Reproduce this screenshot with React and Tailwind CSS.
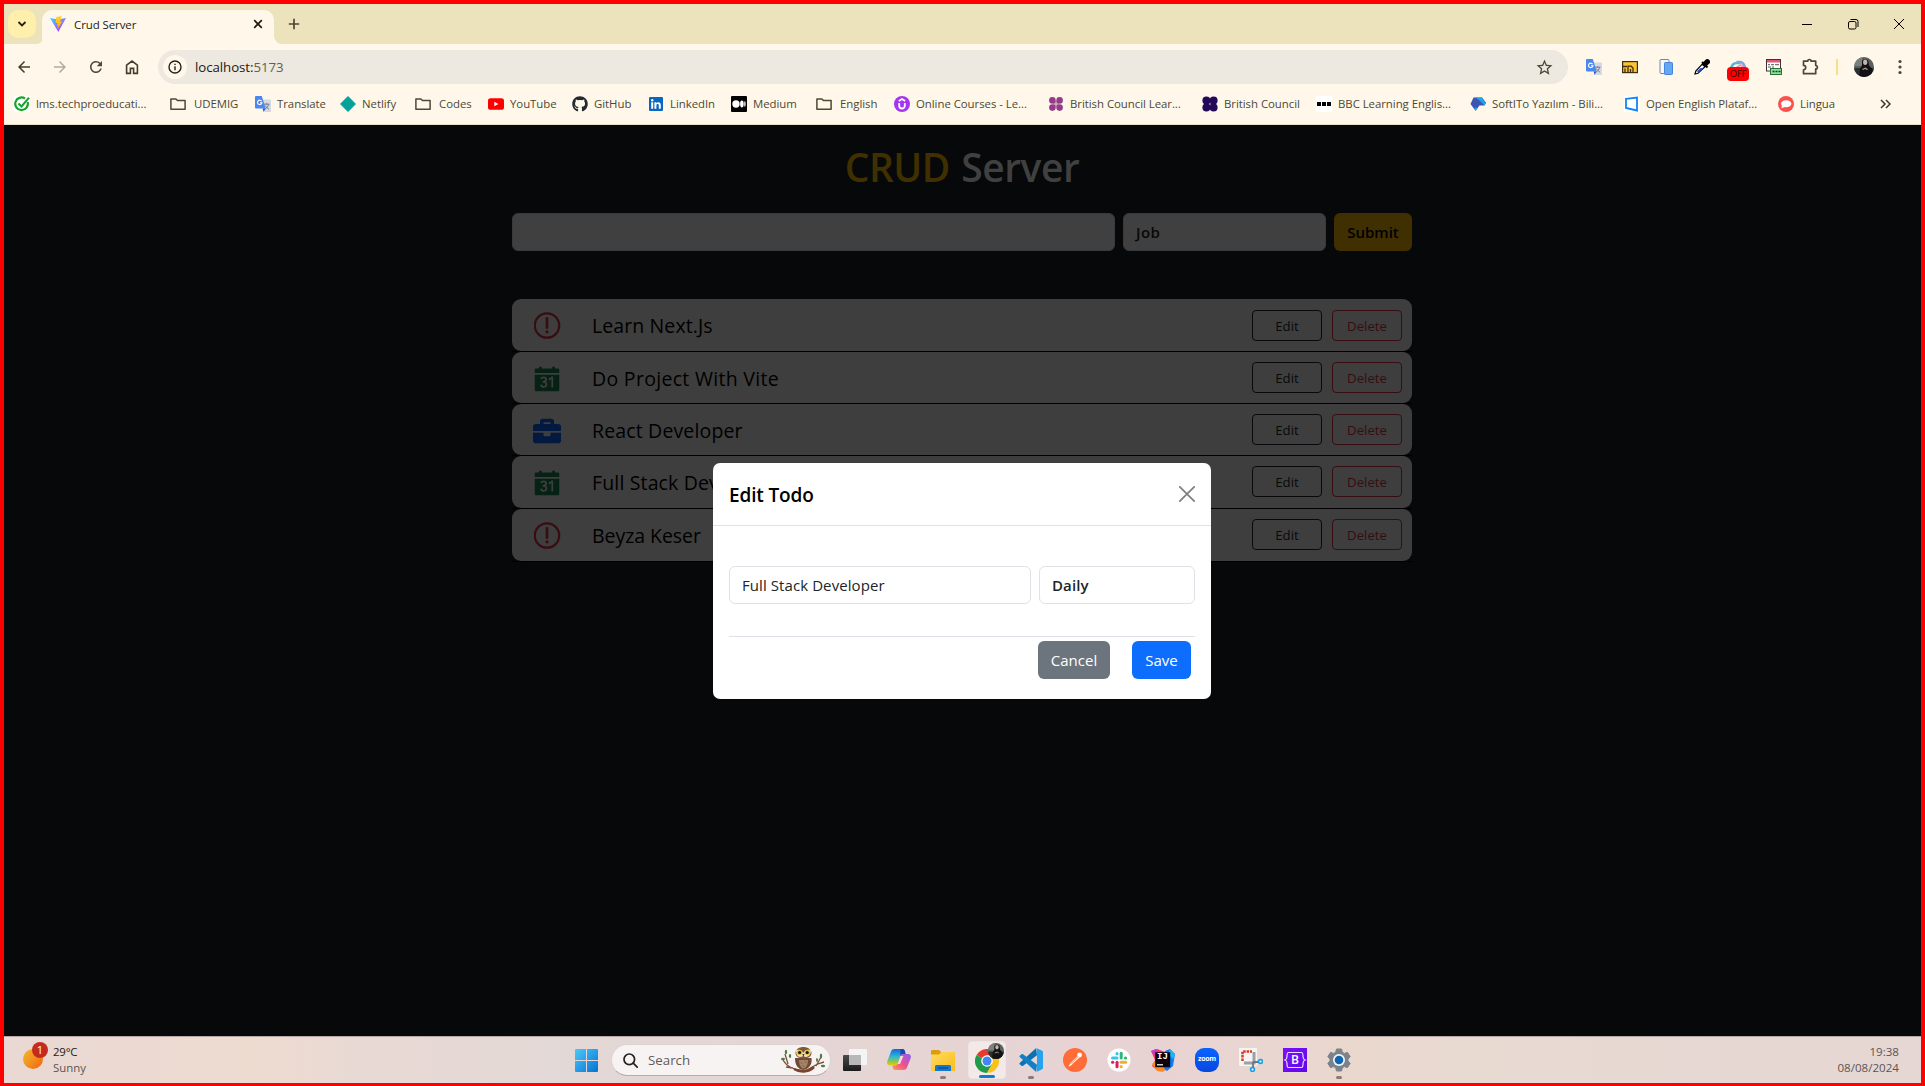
import React from "react";
import { FaBriefcase, FaGithub } from "react-icons/fa";
import { IoCalendarNumberSharp } from "react-icons/io5";
import { MdArrowBack, MdArrowForward, MdRefresh, MdStarBorder } from "react-icons/md";

const FolderIcon = () => (
  <svg width="16" height="16" viewBox="0 0 16 16" fill="none" stroke="#4d4735" strokeWidth="1.5" strokeLinejoin="round">
    <path d="M.9 2.9h5l1.6 1.7h7.6v8.7H.9z" />
  </svg>
);

const TranslateIcon = () => (
  <svg width="16" height="16" viewBox="0 0 16 16">
    <path d="M6 3.5h9a1 1 0 0 1 1 1V15a1 1 0 0 1-1 1H9.5z" fill="#d5d9e0" />
    <path d="M9 8.2h5.5M11.7 7v1.2M13.6 8.4c-.5 2-1.8 3.6-3.5 4.6M10.3 9.5c.7 1.4 1.9 2.6 3.6 3.6" stroke="#6f7f95" strokeWidth="1" fill="none" />
    <path d="M1 0h5.8l3.8 12.500H1a1 1 0 0 1-1-1V1a1 1 0 0 1 1-1z" fill="#4a88f0" />
    <path d="M7.6 12.500h3l-2 3.500z" fill="#2d5bd0" />
    <path d="M6.600 5.200A2.200 2.200 0 1 0 6.900 6.800H5" stroke="#fff" strokeWidth="1.1" fill="none" />
  </svg>
);

const CouncilIcon = ({ color, r }) => (
  <svg width="16" height="16" viewBox="0 0 16 16" fill={color}>
    <circle cx="4.4" cy="4.400" r={r} />
    <circle cx="11.6" cy="4.400" r={r} />
    <circle cx="4.4" cy="11.6" r={r} />
    <circle cx="11.6" cy="11.6" r={r} />
    <path d="M5 5h6v6H5z" opacity=".45" />
  </svg>
);

const bookmarks = [
  { w: "w-[156px]", label: "lms.techproeducati...", icon: (
    <svg width="16" height="16" viewBox="0 0 16 16" fill="none">
      <path d="M0 0h16v16H0z" fill="#fff" />
      <path d="M13.600 6a6.300 6.300 0 1 1-2.600-3.500" stroke="#14a52b" strokeWidth="2.200" />
      <path d="M4.500 7.500l3 3 7.500-8.800" stroke="#14a52b" strokeWidth="2" />
    </svg>) },
  { w: "w-[85px]", folder: true, label: "UDEMIG", icon: <FolderIcon /> },
  { w: "w-[85px]", label: "Translate", icon: <TranslateIcon /> },
  { w: "w-[75px]", label: "Netlify", icon: (
    <svg width="16" height="16" viewBox="0 0 16 16"><path d="M8 .3 15.700 8 8 15.700.3 8z" fill="#05a19c" stroke="#05a19c" strokeLinejoin="round" strokeWidth=".5" /></svg>) },
  { w: "w-[73px]", folder: true, label: "Codes", icon: <FolderIcon /> },
  { w: "w-[84px]", label: "YouTube", icon: (
    <svg width="16" height="16" viewBox="0 0 16 16"><rect x="0" y="2.200" width="16" height="11.600" rx="2.600" fill="#f00" /><path d="M6.300 5.800v4.400L10.400 8z" fill="#fff" /></svg>) },
  { w: "w-[76px]", label: "GitHub", icon: <FaGithub size={16} color="#24292f" /> },
  { w: "w-[83px]", label: "LinkedIn", icon: (
    <svg width="16" height="16" viewBox="0 0 16 16"><rect x="1" y="1" width="14" height="14" rx="1" fill="#0a66c2" /><path d="M3.200 6.300h2v6.500h-2zM6.400 6.300h1.900v.9c1-1.600 4.500-1.400 4.500 1.600v4h-2V9.400c0-2-2.400-1.800-2.400 0v3.400h-2z" fill="#fff" /><circle cx="4.200" cy="4.200" r="1.200" fill="#fff" /></svg>) },
  { w: "w-[85px]", label: "Medium", icon: (
    <svg width="16" height="16" viewBox="0 0 16 16"><rect width="16" height="16" rx="1" fill="#000" /><circle cx="5" cy="8" r="3.700" fill="#fff" /><ellipse cx="10.900" cy="8" rx="1.800" ry="3.400" fill="#fff" /><ellipse cx="13.900" cy="8" rx=".7" ry="3.100" fill="#fff" /></svg>) },
  { w: "w-[78px]", folder: true, label: "English", icon: <FolderIcon /> },
  { w: "w-[154px]", label: "Online Courses - Le...", icon: (
    <svg width="16" height="16" viewBox="0 0 16 16"><circle cx="8" cy="8" r="8" fill="#a435f0" /><path d="M5.200 7v2.800c0 3.600 5.600 3.600 5.600 0V7M4.800 5 8 3.100 11.200 5" stroke="#fff" strokeWidth="1.800" fill="none" /></svg>) },
  { w: "w-[154px]", label: "British Council Lear...", icon: <CouncilIcon color="#943d87" r="3.300" /> },
  { w: "w-[114px]", label: "British Council", icon: <CouncilIcon color="#230859" r="4" /> },
  { w: "w-[154px]", label: "BBC Learning Englis...", icon: (
    <svg width="16" height="16" viewBox="0 0 16 16"><path d="M0 0h16v16H0z" fill="#fff" /><path d="M1 6h4v4H1zM6 6h4v4H6zM11 6h4v4h-4z" /></svg>) },
  { w: "w-[154px]", label: "SoftITo Yazılım - Bili...", icon: (
    <svg width="16" height="16" viewBox="0 0 16 16"><path d="M3.500 1.500H12l4 5.300-1.500 2.600H9.500l-4 5.300L.5 8z" fill="#3d55b5" /><path d="M5.500 1.500H12l4 5.300-1.500 2.600-4.500-4.500z" fill="#22a4e4" /><path d="M4 11.800l1.600 3 2.200-3z" fill="#22a4e4" /></svg>) },
  { w: "w-[154px]", label: "Open English Plataf...", icon: (
    <svg width="16" height="16" viewBox="0 0 16 16"><path d="M0 0h16v16H0z" fill="#fff" /><path d="M2 2.800 13 1.500v13L2 12z" fill="none" stroke="#1583f0" strokeWidth="1.800" /></svg>) },
  { w: "w-[102px]", label: "Lingua", icon: (
    <svg width="16" height="16" viewBox="0 0 16 16"><circle cx="8" cy="8" r="8" fill="#f9524c" /><ellipse cx="8.200" cy="7.800" rx="5.200" ry="3.500" fill="#fff" /><path d="M4 9l-.6 3.200L7 11z" fill="#fff" /></svg>) },
];

const extensions = [
  { name: "translate", icon: <TranslateIcon /> },
  { name: "folder", icon: (
    <svg width="16" height="16" viewBox="0 0 16 16"><rect x=".6" y="2.600" width="14.800" height="11" fill="#fbc335" stroke="#3d3013" strokeWidth="1.200" /><path d="M1 7.500h4M3 13.500V9.500M6 13.500V7.200h3.200L11 9v4.500M8.500 13.500V10" fill="none" stroke="#3d3013" strokeWidth="1.300" /></svg>) },
  { name: "devices", icon: (
    <svg width="16" height="18" viewBox="0 0 16 18"><rect x="2" y="1.500" width="9" height="14" rx="1" fill="#f4f8fd" stroke="#7c8796" /><rect x="6.500" y="4.500" width="8" height="12" rx=".8" fill="#62a8f5" stroke="#4785d8" /></svg>) },
  { name: "picker", icon: (
    <svg width="16" height="16" viewBox="0 0 16 16"><path d="M9 4.500 12.500 1a2 2 0 0 1 2.600 2.700L11.500 7z" fill="#000" stroke="#000" strokeWidth="1.500" /><path d="M8 3l5.500 5.500" stroke="#000" strokeWidth="2" /><path d="M1 15l.8-3L8.300 5.200l2.700 2.600L4 14.300z" fill="#fff" stroke="#000" strokeWidth="1.200" /><path d="M3 12.300l3.500-3.200h3L4 14z" fill="#3156c8" /></svg>) },
  { name: "toggle", icon: (
    <span className="flex h-[30px] flex-col items-center pt-[8px]">
      <svg className="shrink-0" width="16" height="8" viewBox="0 0 16 8" fill="none" strokeWidth="2.600"><path d="M1.500 8a5 5 0 0 1 5-5h4" stroke="#5db6cd" /><path d="M6.500 2h3c3 0 5 2.500 5.500 6" stroke="#7fa8dc" /><path d="M6.500 7.500l4-2.500 4 2.500" stroke="#e79ab5" strokeWidth="1.800" /></svg>
      <span className="-mt-px flex h-[14px] w-[22px] shrink-0 items-center justify-center rounded-[4px] bg-[#ff0000] text-[9.500px] tracking-[-0.2px] text-[#3a0505]">OFF</span>
    </span>) },
  { name: "css", icon: (
    <svg width="16" height="16" viewBox="0 0 16 16"><rect x=".5" y=".5" width="14" height="11.500" fill="#fff" stroke="#413036" /><path d="M1 1h13v2.500H1z" fill="#e35578" /><path d="M2 5.700h2m1 0h3m1 0h4M2 8h3m1 0h2" stroke="#555" strokeWidth="1" /><rect x="4.500" y="9.500" width="11" height="6" fill="#8bdf98" stroke="#2a7036" /><path d="M6.500 12.500h2m1 0h2m1 0h2" stroke="#17401d" strokeWidth="1.600" /></svg>) },
  { name: "puzzle", icon: (
    <svg width="18" height="18" viewBox="0 0 18 18" fill="none" stroke="#4d4735" strokeWidth="1.700" strokeLinejoin="round"><path d="M2.500 3.200h4.200a1.700 1.700 0 0 1 3.400 0h4.600v4.300a1.700 1.700 0 0 1 0 3.400v4.800H2.500v-3.900a2.200 2.200 0 0 0 0-4.400z" /></svg>) },
];

const Avatar = ({ size }) => (
  <svg width={size} height={size} viewBox="0 0 20 20">
    <defs><clipPath id={"avatar" + size}><circle cx="10" cy="10" r="10" /></clipPath></defs>
    <g clipPath={"url(#avatar" + size + ")"}>
      <path d="M0 0h20v20H0z" fill="#59615f" />
      <path d="M0 0h8v9H0z" fill="#78817e" />
      <path d="M0 11h20v9H0z" fill="#2d2e2e" />
      <path d="M8 4.500c.5-3 6-3 6.500 0l.5 4 3 3 1 9H5l1-9 2-3z" fill="#121214" />
      <ellipse cx="11.200" cy="5.300" rx="2.100" ry="2.700" fill="#c9b3a5" />
      <path d="M8.500 12.500l3-1.200 2 1.400" stroke="#b79b8c" strokeWidth="1.200" fill="none" />
    </g>
  </svg>
);

const Chrome = () => (
  <header className="flex h-[121px] w-full flex-col bg-[#fff8ea]">
    <div className="flex h-[40px] w-full bg-[#ece3bd]">
      <button className="mt-[6px] ml-1 flex h-7 w-7 items-center justify-center rounded-[10px] bg-[#ffefad]">
        <svg width="10" height="10" viewBox="0 0 10 10" fill="none" stroke="#26200a" strokeWidth="1.800"><path d="M1.500 3 5 6.500 8.500 3" /></svg>
      </button>
      <div className="-mr-[2px] flex h-[40px] w-[8px] flex-col justify-end">
        <svg width="8" height="8" viewBox="0 0 8 8" fill="#fff8ea"><path d="M8 0v8H0a8 8 0 0 0 8-8z" /></svg>
      </div>
      <div className="mt-[6px] flex h-[34px] w-[232px] items-start rounded-t-[10px] bg-[#fff8ea] pr-[10px] pl-[8px]">
        <svg className="mt-[6px]" width="16" height="16" viewBox="0 0 16 16">
          <defs>
            <linearGradient id="vt" x1="0" y1="0" x2=".8" y2="1"><stop stopColor="#41d1ff" /><stop offset="1" stopColor="#bd34fe" /></linearGradient>
            <linearGradient id="vb" x1="0" y1="0" x2="0" y2="1"><stop stopColor="#ffd52f" /><stop offset="1" stopColor="#ffa800" /></linearGradient>
          </defs>
          <path d="M0 2l8 1.400L16 2 8.300 15.900z" fill="url(#vt)" />
          <path d="M11.500 0 6.200 1l-.5 6 1.800-.3-.6 3 1.300-.3-1 4.200 5-8-2 .3z" fill="url(#vb)" />
        </svg>
        <span className="mt-[7px] ml-2 flex-1 text-[11.500px] leading-4 tracking-[-0.1px] text-[#1f1b10]">Crud Server</span>
        <svg className="mt-2" width="12" height="12" viewBox="0 0 12 12" stroke="#1f1b10" strokeWidth="1.700"><path d="M2.200 2.200l7.600 7.600M9.800 2.200 2.200 9.800" /></svg>
      </div>
      <div className="flex h-[40px] w-[8px] flex-col justify-end">
        <svg width="8" height="8" viewBox="0 0 8 8" fill="#fff8ea"><path d="M0 0v8h8a8 8 0 0 1-8-8z" /></svg>
      </div>
      <svg className="mt-[14px] ml-[6px]" width="12" height="12" viewBox="0 0 12 12" stroke="#4d4735" strokeWidth="1.700"><path d="M6 .8v10.400M.8 6h10.400" /></svg>
      <div className="mt-[14px] mr-[16px] ml-auto flex gap-[34px]">
        <svg width="12" height="12" viewBox="0 0 12 12" stroke="#000"><path d="M1 6.500h10" /></svg>
        <svg width="12" height="12" viewBox="0 0 12 12" stroke="#000" fill="none"><rect x="1.500" y="3.500" width="7.500" height="7.500" rx="1.500" /><path d="M3.500 1.500H9a2 2 0 0 1 2 2V9" /></svg>
        <svg width="12" height="12" viewBox="0 0 12 12" stroke="#000"><path d="M1 1l10 10M11 1 1 11" /></svg>
      </div>
    </div>
    <div className="flex h-[46px] w-full items-center pl-[11px] text-[#4d4735]">
      <div className="flex w-[143px] gap-[18px]">
        <MdArrowBack size={18} color="#433d29" />
        <MdArrowForward size={18} color="#b3ad9b" />
        <MdRefresh size={18} />
        <svg width="18" height="18" viewBox="0 0 18 18" fill="none" stroke="#433d29" strokeWidth="1.600"><path d="M3.600 7.100 9 3l5.400 4.100v8.300h-3.800v-5H7.400v5H3.600z" /></svg>
      </div>
      <div className="flex h-[34px] w-[1410px] items-center rounded-full bg-[#ede8e0] pr-[14px] pl-[5px]">
        <span className="flex h-6 w-6 items-center justify-center rounded-full bg-[#fff8ea]">
          <svg width="14" height="14" viewBox="0 0 14 14" fill="none" stroke="#26211a" strokeWidth="1.400"><circle cx="7" cy="7" r="6" /><path d="M7 6.200v4M7 3.700v1.400" /></svg>
        </span>
        <span className="mt-px ml-2 flex-1 text-[13.300px] tracking-[-0.08px] text-[#1f1b10]">localhost:<span className="text-[#635e50]">5173</span></span>
        <MdStarBorder size={19} color="#4d4735" />
      </div>
      <div className="ml-[8px] flex items-center">
        {extensions.map((e) => (
          <span key={e.name} className="flex h-9 w-9 items-center justify-center">{e.icon}</span>
        ))}
      </div>
      <span className="ml-[8px] h-4 w-[2px] bg-[#f5e08a]" />
      <span className="ml-[16px]"><Avatar size={20} /></span>
      <svg className="ml-[24px]" width="4" height="16" viewBox="0 0 4 16" fill="#4d4735"><circle cx="2" cy="2.500" r="1.600" /><circle cx="2" cy="8" r="1.600" /><circle cx="2" cy="13.500" r="1.600" /></svg>
    </div>
    <div className="flex h-[35px] w-full items-center border-b border-[#e6dfc8] pb-[6px] pl-[10px] text-[11.400px] text-[#4d4735]">
      {bookmarks.map((b) => (
        <a key={b.label} className={`flex shrink-0 items-center whitespace-nowrap ${b.w} ${b.folder ? "gap-2" : "gap-1.5"}`}>
          <span className="shrink-0">{b.icon}</span>
          <span className="tracking-[-0.04px]">{b.label}</span>
        </a>
      ))}
      <svg width="11" height="10" viewBox="0 0 11 10" fill="none" stroke="#3b3626" strokeWidth="1.500"><path d="M1 1l4 4-4 4M6 1l4 4-4 4" /></svg>
    </div>
  </header>
);

const rows = [
  { text: "Learn Next.Js", kind: "urgent", height: "h-[53px]", pad: "pt-[11px]", line: "h-[31px] leading-[31px]", tracking: "tracking-[0.1px]" },
  { text: "Do Project With Vite", kind: "daily", height: "h-[52px]", pad: "pt-[10px]", line: "h-[33px] leading-[33px]", tracking: "tracking-[0.3px]" },
  { text: "React Developer", kind: "job", height: "h-[52px]", pad: "pt-[10px]", line: "h-[33px] leading-[33px]", tracking: "tracking-[0.15px]" },
  { text: "Full Stack Developer", kind: "daily", height: "h-[53px]", pad: "pt-[10px]", line: "h-[33px] leading-[33px]", tracking: "tracking-[0.15px]" },
  { text: "Beyza Keser", kind: "urgent", height: "h-[53px]", pad: "pt-[10px]", line: "h-[33px] leading-[33px]", tracking: "tracking-[-0.05px]" },
];

const rowIcons = {
  urgent: (
    <svg width="27" height="27" viewBox="0 0 27 27" fill="none" stroke="#370d11" strokeWidth="2.200">
      <circle cx="13" cy="13.500" r="12.200" />
      <path d="M13 6.300v9.400" strokeWidth="2.600" strokeLinecap="round" />
      <circle cx="13" cy="19.800" r="1.600" fill="#370d11" stroke="none" />
    </svg>
  ),
  daily: <IoCalendarNumberSharp size={28} color="#062215" />,
  job: <FaBriefcase size={28} color="#03193f" />,
};

const TodoRow = ({ text, kind, height, pad, line, tracking }) => (
  <li className={`border-b border-black ${height}`}>
    <div className={`flex h-full items-start rounded-[9px] bg-[#3e3e3e] ${pad}`}>
      <span className={`ml-[21px] flex w-[28px] shrink-0 items-center justify-center ${line}`}>{rowIcons[kind]}</span>
      <span className={`ml-[31px] flex-1 text-[19.500px] text-black ${tracking} ${line}`}>{text}</span>
      <button className="h-[31px] w-[70px] rounded-[4px] border border-[#08090a] pt-[2px] text-[13.200px] text-[#08090a]">Edit</button>
      <button className="mr-[10px] ml-[10px] h-[31px] w-[70px] rounded-[4px] border border-[#370d11] pt-[2px] text-[13.200px] text-[#370d11]">Delete</button>
    </div>
  </li>
);

const TodoApp = () => (
  <div className="ml-[508px] flex w-[900px] flex-col">
    <h1 className="mt-[13px] h-[60px] text-center text-[39px] leading-[58px] font-semibold tracking-[-0.45px] [word-spacing:1.500px] text-[#404040]">
      <span className="text-[#403001]">CRUD</span> Server
    </h1>
    <div className="mt-[15px] flex h-[38px] gap-2 text-[15px] font-semibold">
      <div className="w-[603px] rounded-[6px] border border-[#38393a] bg-[#404040]" />
      <div className="flex w-[203px] items-center rounded-[6px] border border-[#38393a] bg-[#404040] pl-3 tracking-[0.4px] text-[#08090a]">Job</div>
      <button className="flex-1 rounded-[6px] bg-[#403001] text-black">Submit</button>
    </div>
    <ul className="mt-[48px]">
      {rows.map((r) => <TodoRow key={r.text} {...r} />)}
    </ul>
  </div>
);

const EditModal = () => (
  <div className="absolute top-[459px] left-[709px] flex h-[236px] w-[498px] flex-col rounded-[7px] bg-white text-[#212529]">
    <div className="flex h-[63px] items-center justify-between border-b border-[#dee2e6] pr-4 pl-4">
      <h5 className="mt-[2px] text-[19px] font-semibold tracking-[-0.15px] text-black">Edit Todo</h5>
      <svg width="16" height="16" viewBox="0 0 16 16" stroke="#7f7f7f" strokeWidth="1.700" strokeLinecap="round"><path d="M.8.8l14.400 14.400M15.200.8.8 15.200" /></svg>
    </div>
    <div className="mx-4 mt-10 flex h-[38px] gap-2 text-[15px]">
      <div className="flex w-[302px] items-center rounded-[6px] border border-[#dee2e6] pl-3 tracking-[0.08px]">Full Stack Developer</div>
      <div className="flex flex-1 items-center rounded-[6px] border border-[#dee2e6] pl-3 font-semibold tracking-[0.1px]">Daily</div>
    </div>
    <div className="mx-4 mt-8 flex justify-end gap-[22px] border-t border-[#dee2e6] pt-1 pr-1 text-[15px] font-medium text-white">
      <button className="h-[38px] w-[72px] rounded-[6px] bg-[#6c757d]">Cancel</button>
      <button className="h-[38px] w-[59px] rounded-[6px] bg-[#0d6efd]">Save</button>
    </div>
  </div>
);

const Owl = () => (
  <svg width="46" height="28" viewBox="0 0 46 28">
    <path d="M3 14c6 10 14 9 21 11 7-2 10-7 20-9M8 18 5 8M36 20l5-9M13 22 6 21" stroke="#7d5137" strokeWidth="1.300" fill="none" />
    <path d="M14 23c5 3 14 4 20-2" stroke="#7a432b" strokeWidth="2.600" fill="none" />
    <g fill="#4f7d48"><ellipse cx="3" cy="13" rx="2" ry="1.200" /><ellipse cx="6" cy="6" rx="1.200" ry="2.200" /><ellipse cx="10" cy="10" rx="1.200" ry="2" /><ellipse cx="41" cy="10" rx="1.200" ry="2.500" /><ellipse cx="37" cy="14" rx="1" ry="2" /><ellipse cx="43" cy="20" rx="2.200" ry="1.200" /></g>
    <path d="M15 12h16.500c1 7-3 11-8 12-6-1-8.500-5-8.500-12z" fill="#6f4b36" />
    <path d="M19 14h9c0 5-2 8-4.500 8.500C21 22 19 19 19 14z" fill="#a5836a" />
    <path d="M15.500 7c0-8 15.500-8 16 0 0 7.500-16 7.500-16 0z" fill="#80583c" />
    <path d="M16 4c3-1 6 0 7.300 3C24.500 4 27.500 3 31 4c0 7-5 8-7.700 6-4 2-7.300 1-7.300-6z" fill="#efe1c6" />
    <circle cx="19.500" cy="6.500" r="2.800" fill="#dfc544" /><circle cx="27.300" cy="6.500" r="2.800" fill="#dfc544" />
    <circle cx="19.600" cy="6.500" r="1.600" fill="#1b1712" /><circle cx="27.200" cy="6.500" r="1.600" fill="#1b1712" />
    <path d="M22.300 8h2.200l-1.100 3z" fill="#4b3326" />
    <path d="M21 16.500l1 1m3-2 1 1m-3 3 1 1" stroke="#664330" />
  </svg>
);

const apps = [
  { name: "taskview", icon: (
    <svg width="24" height="24" viewBox="0 0 24 24"><defs><linearGradient id="tv" x1="0" y1="0" x2="0" y2="1"><stop stopColor="#4a4a4a" /><stop offset="1" stopColor="#1b1b1b" /></linearGradient></defs><rect y="7" width="18" height="16" rx="1" fill="url(#tv)" /><rect x="6" y="1" width="18" height="16" rx="1" fill="#f5f4f4" /><path d="M6 7h12v10H6z" fill="#b9b8b8" /></svg>) },
  { name: "copilot", icon: (
    <svg width="24" height="24" viewBox="0 0 24 24">
      <defs>
        <linearGradient id="cp1" x1="0" y1="0" x2="0" y2="1"><stop stopColor="#1667d9" /><stop offset=".45" stopColor="#2fb4d8" /><stop offset=".75" stopColor="#8cc84b" /><stop offset="1" stopColor="#f2c811" /></linearGradient>
        <linearGradient id="cp2" x1=".8" y1="0" x2="0" y2="1"><stop stopColor="#9a5be8" /><stop offset=".5" stopColor="#ee5091" /><stop offset="1" stopColor="#fb9a4e" /></linearGradient>
      </defs>
      <path d="M7.500 1h8c1.500 0 2 1 2.500 2.500L18.500 6h-2c-2 0-2.800 1-3.300 2.500L11 15c-.5 1.800-1.200 2.500-3 2.500H3c-2.500 0-3.400-2-2.600-4.500L4 3.500C4.700 1.800 5.800 1 7.500 1z" fill="url(#cp1)" />
      <path d="M13.500 1h2c1.500 0 2 1 2.500 2.500l.5 2.500h-2c-2 0-2.800 1-3.300 2.500z" fill="#1a49b0" />
      <path d="M16.500 22h-8C7 22 6.200 21 5.800 19.500L5.500 17.500H8c2 0 2.600-1 3.100-2.500L13.200 8.500C13.700 6.700 14.500 6 16.500 6h4.600c2.500 0 3.300 2 2.500 4.500L20 19.500c-.6 1.700-1.800 2.500-3.500 2.500z" fill="url(#cp2)" />
      <path d="M13.400 8h3l-3.300 8h-2.400z" fill="#f2dcdb" />
    </svg>) },
  { name: "explorer", dot: true, icon: (
    <svg width="24" height="24" viewBox="0 0 24 24"><defs><linearGradient id="fe" x1="0" y1="0" x2="1" y2="1"><stop stopColor="#ffdb63" /><stop offset="1" stopColor="#fbbc16" /></linearGradient></defs><path d="M0 3a1 1 0 0 1 1-1h7l2 2h12v5H0z" fill="#dc9c0c" /><path d="M0 6.500h8L10.500 4H23a1 1 0 0 1 1 1v17a1 1 0 0 1-1 1H1a1 1 0 0 1-1-1z" fill="url(#fe)" /><path d="M4 23v-4.500A1.500 1.500 0 0 1 5.500 17h13a1.500 1.500 0 0 1 1.500 1.500V23z" fill="#1478d0" /><path d="M7 20h10" stroke="#0b4f93" strokeWidth="1.500" /></svg>) },
  { name: "chrome", active: true, icon: (
    <svg width="24" height="24" viewBox="0 0 24 24"><path d="M12 12 1.600 6A12 12 0 0 1 22.400 6z" fill="#e53b30" /><path d="M12 12 1.600 6A12 12 0 0 0 12 24l5.200-9z" fill="#229a4b" /><path d="M12 12l5.200 3L12 24A12 12 0 0 0 22.400 6H12z" fill="#fbc116" /><circle cx="12" cy="12" r="5.800" fill="#fff" /><circle cx="12" cy="12" r="4.500" fill="#4285f4" /></svg>) },
  { name: "vscode", dot: true, icon: (
    <svg width="24" height="24" viewBox="0 0 24 24"><path d="M17.200 0 1 14.800c-.8.7-.7 1.300 0 1.800l1.600 1.200c.5.400 1 .3 1.500 0L18 7.200z" fill="#0a71b5" /><path d="M17.200 24 1 9.200c-.8-.7-.7-1.300 0-1.800l1.600-1.200c.5-.4 1-.3 1.500 0L18 16.800z" fill="#1280c6" /><path d="M17.200 0l6 2.700c.5.300.8.600.8 1.200v16.200c0 .6-.3.900-.8 1.200l-6 2.700c1-.4.800-1 .8-2V2c0-1 0-1.600-.8-2z" fill="#25a3ee" /></svg>) },
  { name: "postman", icon: (
    <svg width="24" height="24" viewBox="0 0 24 24"><circle cx="12" cy="12" r="12" fill="#ff6c37" /><circle cx="16.600" cy="7" r="2.400" fill="#fff" /><path d="M14.500 8 7 15.500l1.500 1.300L16.500 9.500z" fill="#fff" /><path d="M9 15.500 6.200 18" stroke="#fff" strokeWidth="1.500" /><path d="M15.500 8.200 8 15.800" stroke="#ff6c37" strokeWidth=".7" /></svg>) },
  { name: "slack", icon: (
    <svg width="24" height="24" viewBox="0 0 24 24"><circle cx="12" cy="12" r="11.500" fill="#fff" /><g strokeWidth="3" strokeLinecap="round"><path d="M10 5.500v.2" stroke="#36c5f0" /><path d="M5.500 10H10" stroke="#36c5f0" /><path d="M14.200 5.300V10" stroke="#2eb67d" /><path d="M18.700 10h-.3" stroke="#2eb67d" /><path d="M18.700 14.200H14" stroke="#ecb22e" /><path d="M14.200 18.500v.2" stroke="#ecb22e" /><path d="M10 14.200v4.500" stroke="#e01e5a" /><path d="M5.500 14.200h.3" stroke="#e01e5a" /></g></svg>) },
  { name: "intellij", mark: "IJ", icon: (
    <svg width="24" height="24" viewBox="0 0 24 24"><path d="M0 3l6-2 8 3 3 18-10 1-6-5 3-6z" fill="#fc2f6b" /><path d="M1 16l6-6 10 8-5 6-6-1z" fill="#fb8b1f" /><path d="M14 3l5-2 5 5-2 12-6 5-4-4z" fill="#087cfa" /><path d="M19 1l5 5-2 5-5-5z" fill="#1fb5f5" /><path d="M0 3l5-2 3 4-3 3z" fill="#b642d4" /><rect x="4.200" y="4.200" width="15" height="15" fill="#0c0208" /><path d="M6 16.800h6" stroke="#fff" strokeWidth="1.200" /></svg>) },
  { name: "zoom", icon: (
    <span className="flex h-6 w-6 items-center justify-center rounded-[9px] bg-linear-to-b from-[#0b63ff] to-[#0848e0] pb-[2px] text-[7px] font-bold tracking-[-0.3px] text-white">zoom</span>) },
  { name: "snip", icon: (
    <svg width="24" height="24" viewBox="0 0 24 24"><rect width="18" height="18" rx="1" fill="#f6f3f2" /><path d="M3.500 13V3.500H13" fill="none" stroke="#d1401f" strokeWidth="2.500" strokeDasharray="2.500 .9" /><path d="M15 4v11H5" fill="none" stroke="#9aa0a5" strokeWidth="3" /><path d="M14 14l6 0M14 14v6" stroke="#6f777d" strokeWidth="1.800" /><circle cx="21.500" cy="13.500" r="1.900" fill="#fff" stroke="#1f9fe0" strokeWidth="1.700" /><circle cx="13.500" cy="21.500" r="1.900" fill="#fff" stroke="#1f9fe0" strokeWidth="1.700" /></svg>) },
  { name: "bootstrap", icon: (
    <span className="relative flex h-6 w-6 items-center justify-center bg-linear-to-br from-[#7a10fb] to-[#6008e8] text-[12px] font-semibold text-white">
      <svg className="absolute" width="24" height="24" viewBox="0 0 24 24" fill="none" stroke="#eadcff" strokeWidth="1.200"><path d="M5.500 4.500h13c1.500 0 1.500 2 1.500 4 0 2 .5 3 2 3.500-1.500.5-2 1.500-2 3.500s0 4-1.500 4h-13c-1.500 0-1.500-2-1.500-4s-.5-3-2-3.500c1.500-.5 2-1.500 2-3.500s0-4 1.500-4z" /></svg>
      B
    </span>) },
  { name: "settings", dot: true, icon: (
    <svg width="24" height="24" viewBox="0 0 24 24"><path d="M9.500 1h5l.8 3.200 2 1.200 3.200-1L23.200 8.700 21 11v2l2.200 2.300-2.700 4.300-3.200-1-2 1.200-.8 3.200h-5l-.8-3.200-2-1.200-3.200 1L.8 15.300 3 13v-2L.8 8.700l2.700-4.300 3.200 1 2-1.200z" fill="#7a838b" stroke="#7a838b" strokeLinejoin="round" /><circle cx="12" cy="12" r="6" fill="#f3f6f9" /><circle cx="12" cy="12" r="4.300" fill="#1064b0" /></svg>) },
];

const Taskbar = () => (
  <footer className="flex h-[47px] w-full items-start justify-between border-t border-[#b5a7a6] bg-[linear-gradient(90deg,#e9d8d3_0%,#eedbd0_13%,#e9d9d4_18%,#e2d8d6_30%,#e6d4d3_50%,#e8d3d3_60%,#ead8ce_71%,#e8dad2_78%,#e7d7d3_90%,#e6d7d4_100%)]">
    <div className="flex w-[571px] pl-[19px]">
      <div className="relative mt-[12px] h-5 w-5 rounded-full bg-linear-to-br from-[#f0b92f] to-[#f0620d]">
        <span className="absolute -top-[7px] left-[9px] flex h-4 w-4 items-center justify-center rounded-full bg-[#c42b1c] text-[11px] text-white">1</span>
      </div>
      <div className="mt-[7px] ml-[10px] text-[11.400px] leading-4 text-[#5c5454]"><p className="tracking-[-0.2px] text-[#1b1919]">29°C</p><p>Sunny</p></div>
    </div>
    <div className="flex flex-1">
      <svg className="mt-3" width="23" height="23" viewBox="0 0 23 23"><defs><linearGradient id="win" x1="0" y1="0" x2="1" y2="1"><stop stopColor="#4cc8fb" /><stop offset="1" stopColor="#0572d2" /></linearGradient></defs><path d="M1 0h10v11H0V1a1 1 0 0 1 1-1zM12 0h10a1 1 0 0 1 1 1v10H12zM0 12h11v11H1a1 1 0 0 1-1-1zM12 12h11v10a1 1 0 0 1-1 1H12z" fill="url(#win)" /></svg>
      <div className="mt-[7px] ml-[13px] flex h-[32px] w-[220px] items-center rounded-full border border-[#ddd2d2] border-b-[#b9abab] bg-[#f7f3f2] pr-[4px] pl-[11px]">
        <svg width="15" height="15" viewBox="0 0 15 15" fill="none" stroke="#222" strokeWidth="1.700" strokeLinecap="round"><circle cx="6.300" cy="6.300" r="5.300" /><path d="M10.200 10.200l4 4" /></svg>
        <span className="mt-px ml-[10px] flex-1 text-[13.300px] text-[#5f5a5a]">Search</span>
        <Owl />
      </div>
      <div className="mt-1 ml-[2px] flex">
        {apps.map((a) => (
          <div key={a.name} className="flex w-[44px] justify-center">
            <div className={`relative flex h-[38px] w-[38px] justify-center rounded-[4px] pt-[7px] ${a.active ? "border border-[#eee4e4] bg-[#f3e9e9]" : ""}`}>
              <span className="relative h-6 w-6">{a.icon}</span>
              {a.mark && <span className="absolute top-[12px] left-[13px] font-['Liberation_Mono',monospace] text-[9px] leading-[9px] font-bold text-white">{a.mark}</span>}
              {a.active && <span className="absolute top-[1px] left-[19px]"><Avatar size={16} /></span>}
              {a.active && <span className="absolute bottom-0 h-[3px] w-4 rounded-full bg-[#0f7bd4]" />}
              {a.dot && <span className="absolute bottom-0 h-[3px] w-[6px] rounded-full bg-[#857c7c]" />}
            </div>
          </div>
        ))}
      </div>
    </div>
    <div className="mt-[7px] mr-[22px] text-right text-[11.600px] leading-4 text-[#5c5454]"><p>19:38</p><p>08/08/2024</p></div>
  </footer>
);

export default function App() {
  return (
    <div className="h-[1086px] w-[1925px] overflow-hidden bg-[#ff0000] px-1 pt-1 pb-[3px] font-['Open_Sans','Noto_Sans',sans-serif]">
      <div className="relative flex h-full flex-col">
        <Chrome />
        <main className="h-[911px] shrink-0 bg-[#070809]"><TodoApp /></main>
        <Taskbar />
        <EditModal />
      </div>
    </div>
  );
}
